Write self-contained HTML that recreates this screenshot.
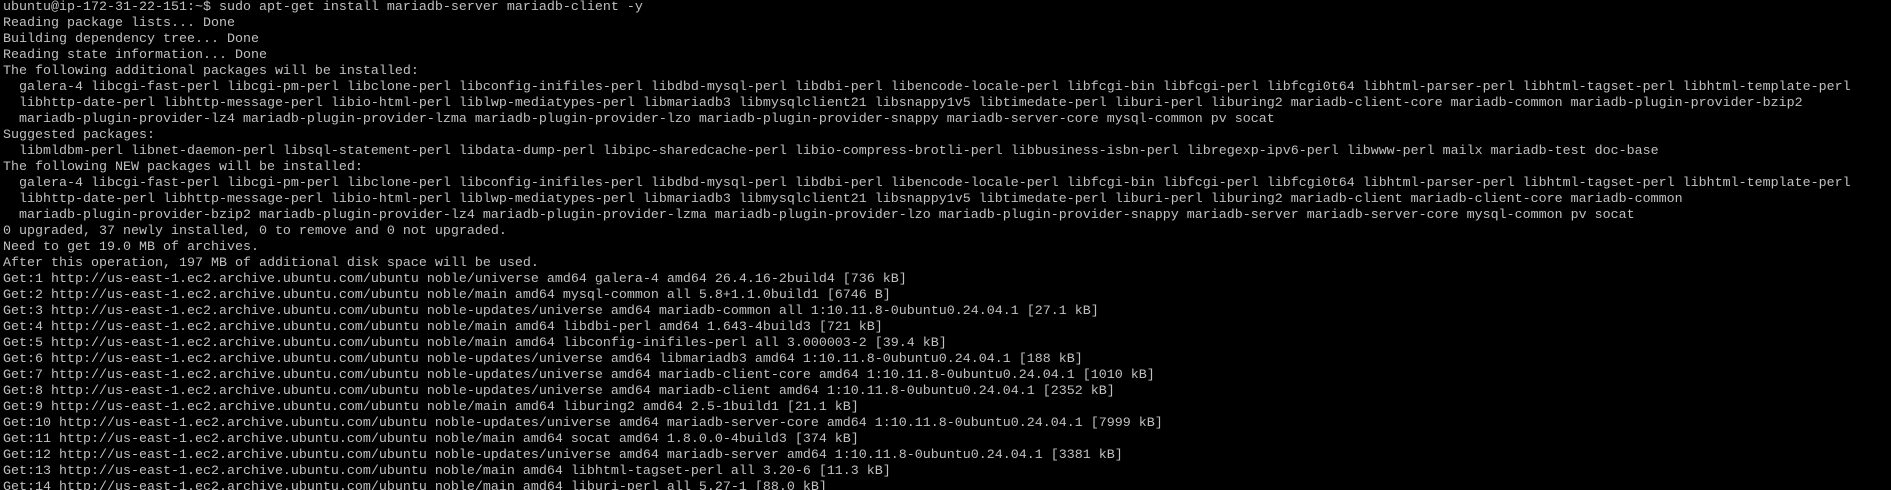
<!DOCTYPE html>
<html><head><meta charset="utf-8"><style>
html,body{margin:0;padding:0;background:#000;width:1891px;height:490px;overflow:hidden}
pre{margin:0;padding:0 0 0 3px;font-family:"Liberation Mono",monospace;font-size:13.33px;line-height:16px;color:#c0c0c0;white-space:pre}
</style></head><body><pre>ubuntu@ip-172-31-22-151:~$ sudo apt-get install mariadb-server mariadb-client -y
Reading package lists... Done
Building dependency tree... Done
Reading state information... Done
The following additional packages will be installed:
  galera-4 libcgi-fast-perl libcgi-pm-perl libclone-perl libconfig-inifiles-perl libdbd-mysql-perl libdbi-perl libencode-locale-perl libfcgi-bin libfcgi-perl libfcgi0t64 libhtml-parser-perl libhtml-tagset-perl libhtml-template-perl
  libhttp-date-perl libhttp-message-perl libio-html-perl liblwp-mediatypes-perl libmariadb3 libmysqlclient21 libsnappy1v5 libtimedate-perl liburi-perl liburing2 mariadb-client-core mariadb-common mariadb-plugin-provider-bzip2
  mariadb-plugin-provider-lz4 mariadb-plugin-provider-lzma mariadb-plugin-provider-lzo mariadb-plugin-provider-snappy mariadb-server-core mysql-common pv socat
Suggested packages:
  libmldbm-perl libnet-daemon-perl libsql-statement-perl libdata-dump-perl libipc-sharedcache-perl libio-compress-brotli-perl libbusiness-isbn-perl libregexp-ipv6-perl libwww-perl mailx mariadb-test doc-base
The following NEW packages will be installed:
  galera-4 libcgi-fast-perl libcgi-pm-perl libclone-perl libconfig-inifiles-perl libdbd-mysql-perl libdbi-perl libencode-locale-perl libfcgi-bin libfcgi-perl libfcgi0t64 libhtml-parser-perl libhtml-tagset-perl libhtml-template-perl
  libhttp-date-perl libhttp-message-perl libio-html-perl liblwp-mediatypes-perl libmariadb3 libmysqlclient21 libsnappy1v5 libtimedate-perl liburi-perl liburing2 mariadb-client mariadb-client-core mariadb-common
  mariadb-plugin-provider-bzip2 mariadb-plugin-provider-lz4 mariadb-plugin-provider-lzma mariadb-plugin-provider-lzo mariadb-plugin-provider-snappy mariadb-server mariadb-server-core mysql-common pv socat
0 upgraded, 37 newly installed, 0 to remove and 0 not upgraded.
Need to get 19.0 MB of archives.
After this operation, 197 MB of additional disk space will be used.
Get:1 http://us-east-1.ec2.archive.ubuntu.com/ubuntu noble/universe amd64 galera-4 amd64 26.4.16-2build4 [736 kB]
Get:2 http://us-east-1.ec2.archive.ubuntu.com/ubuntu noble/main amd64 mysql-common all 5.8+1.1.0build1 [6746 B]
Get:3 http://us-east-1.ec2.archive.ubuntu.com/ubuntu noble-updates/universe amd64 mariadb-common all 1:10.11.8-0ubuntu0.24.04.1 [27.1 kB]
Get:4 http://us-east-1.ec2.archive.ubuntu.com/ubuntu noble/main amd64 libdbi-perl amd64 1.643-4build3 [721 kB]
Get:5 http://us-east-1.ec2.archive.ubuntu.com/ubuntu noble/main amd64 libconfig-inifiles-perl all 3.000003-2 [39.4 kB]
Get:6 http://us-east-1.ec2.archive.ubuntu.com/ubuntu noble-updates/universe amd64 libmariadb3 amd64 1:10.11.8-0ubuntu0.24.04.1 [188 kB]
Get:7 http://us-east-1.ec2.archive.ubuntu.com/ubuntu noble-updates/universe amd64 mariadb-client-core amd64 1:10.11.8-0ubuntu0.24.04.1 [1010 kB]
Get:8 http://us-east-1.ec2.archive.ubuntu.com/ubuntu noble-updates/universe amd64 mariadb-client amd64 1:10.11.8-0ubuntu0.24.04.1 [2352 kB]
Get:9 http://us-east-1.ec2.archive.ubuntu.com/ubuntu noble/main amd64 liburing2 amd64 2.5-1build1 [21.1 kB]
Get:10 http://us-east-1.ec2.archive.ubuntu.com/ubuntu noble-updates/universe amd64 mariadb-server-core amd64 1:10.11.8-0ubuntu0.24.04.1 [7999 kB]
Get:11 http://us-east-1.ec2.archive.ubuntu.com/ubuntu noble/main amd64 socat amd64 1.8.0.0-4build3 [374 kB]
Get:12 http://us-east-1.ec2.archive.ubuntu.com/ubuntu noble-updates/universe amd64 mariadb-server amd64 1:10.11.8-0ubuntu0.24.04.1 [3381 kB]
Get:13 http://us-east-1.ec2.archive.ubuntu.com/ubuntu noble/main amd64 libhtml-tagset-perl all 3.20-6 [11.3 kB]
Get:14 http://us-east-1.ec2.archive.ubuntu.com/ubuntu noble/main amd64 liburi-perl all 5.27-1 [88.0 kB]
</pre></body></html>
